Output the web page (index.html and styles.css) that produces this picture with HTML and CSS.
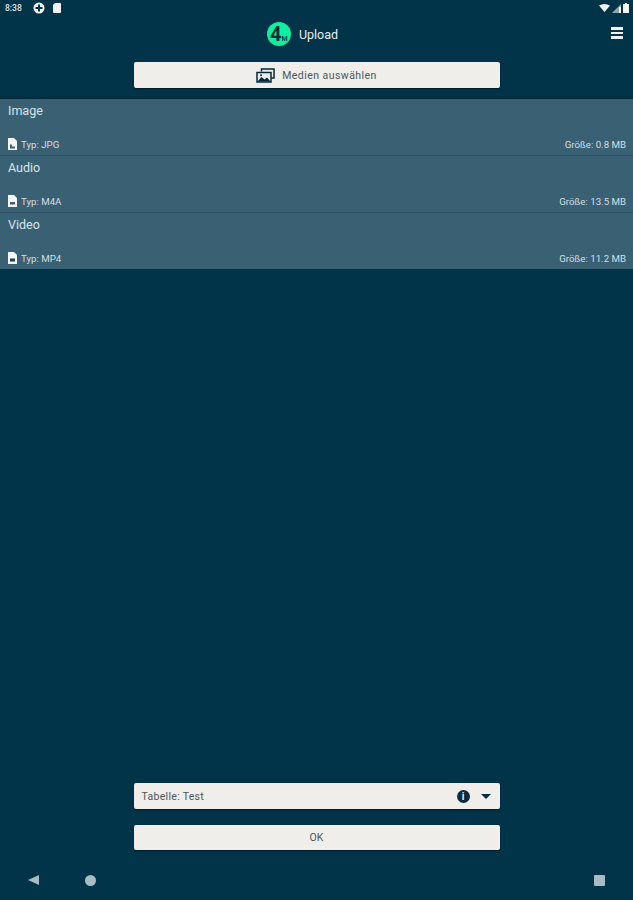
FILE: index.html
```html
<!DOCTYPE html>
<html lang="en">
<head>
    <meta charset="UTF-8">
    <meta name="viewport" content="width=device-width, initial-scale=1.0">
    <title>Upload</title>
    <link rel="stylesheet" href="styles.css">
</head>
<body>
    <div class="status-bar">
        <span class="clock">8:38</span>
        <svg class="status-icon" width="12" height="12" viewBox="0 0 12 12"><circle cx="6" cy="6" r="5.5" fill="#f2f4f4"/><path d="M5 2.5h2v2.500h2.500v2h-2.500v2.500h-2v-2.500h-2.500v-2h2.500z" fill="#033246"/></svg>
        <svg class="status-icon" width="8" height="10" viewBox="0 0 8 10"><path d="M2 0h5a1 1 0 0 1 1 1v8a1 1 0 0 1-1 1h-6a1 1 0 0 1-1-1v-7z" fill="#f2f4f4"/></svg>
        <div class="status-right">
            <svg width="11" height="8" viewBox="0 0 11 8"><path d="M0 1.500q5.500-3 11 0l-5.500 6.500z" fill="#f4f6f6"/></svg>
            <svg width="9" height="9" viewBox="0 0 9 9"><path d="M9 0v9h-9z" fill="#8fa5ae"/><path d="M7 3v6h2v-6z" fill="#f4f6f6"/></svg>
            <svg width="6" height="10" viewBox="0 0 6 10"><path d="M2 0h2v1h2v9h-6v-9h2z" fill="#f4f6f6"/></svg>
        </div>
    </div>
    <header class="top-bar">
        <div class="title-group">
            <div class="logo"><span class="logo-four">4</span><span class="logo-m">M</span></div>
            <span class="title">Upload</span>
        </div>
        <div class="menu-icon"><span></span><span></span><span></span></div>
    </header>
    <div class="centered">
        <button class="wide-btn pick-btn">
            <svg width="19" height="15" viewBox="0 0 19 15"><path d="M5.500 3.500v-2.500h12.500v9h-2.500" fill="none" stroke="#05283a" stroke-width="1.500"/><path d="M1 4.500h14v9.500h-14z" fill="none" stroke="#05283a" stroke-width="1.500"/><path d="M1.500 13.500l4-4.500 3 2.500 2.500-2 3.500 4z" fill="#05283a"/><circle cx="5" cy="7.200" r="1" fill="#05283a"/></svg>
            Medien auswählen
        </button>
    </div>
    <div class="media-list">
        <div class="media-row">
            <div class="media-name">Image</div>
            <div class="media-meta">
                <span class="media-type"><svg width="9" height="12" viewBox="0 0 9 12"><path d="M0 0h6l3 3v9h-9z" fill="#f4f6f6"/><path d="M2 6.500h2v2h3v2h-5z" fill="#3a6073"/></svg>Typ: JPG</span>
                <span>Größe: 0.8 MB</span>
            </div>
        </div>
        <div class="media-row">
            <div class="media-name">Audio</div>
            <div class="media-meta">
                <span class="media-type"><svg width="9" height="12" viewBox="0 0 9 12"><path d="M0 0h6l3 3v9h-9z" fill="#f4f6f6"/><path d="M2 7h5v2.500h-5z" fill="#3a6073"/></svg>Typ: M4A</span>
                <span>Größe: 13.5 MB</span>
            </div>
        </div>
        <div class="media-row">
            <div class="media-name">Video</div>
            <div class="media-meta">
                <span class="media-type"><svg width="9" height="12" viewBox="0 0 9 12"><path d="M0 0h6l3 3v9h-9z" fill="#f4f6f6"/><path d="M2 6.500h5v3h-5z" fill="#1e3f52"/></svg>Typ: MP4</span>
                <span>Größe: 11.2 MB</span>
            </div>
        </div>
    </div>
    <div class="bottom-actions">
        <div class="wide-btn table-select">
            <span class="table-label">Tabelle: Test</span>
            <span class="info-icon">i</span>
            <span class="caret"></span>
        </div>
        <button class="wide-btn ok-btn">OK</button>
    </div>
    <nav class="nav-bar">
        <span class="nav-back"></span>
        <span class="nav-home"></span>
        <span class="nav-recent"></span>
    </nav>
</body>
</html>
```

FILE: styles.css
```css
* {
  box-sizing: border-box;
}
body {
  margin: 0;
  width: 633px;
  height: 900px;
  background-color: #023449;
  color: #f0f3f3;
  font-family: Roboto, "Liberation Sans", sans-serif;
  display: flex;
  flex-direction: column;
  overflow: hidden;
}
.status-bar {
  height: 16px;
  display: flex;
  align-items: center;
  gap: 8px;
  padding: 0 4px 0 5px;
}
.clock {
  font-size: 8.500px;
  font-weight: 500;
  width: 20px;
  color: #dfe6e8;
}
.status-right {
  margin-left: auto;
  display: flex;
  align-items: center;
  gap: 2px;
}
.top-bar {
  position: relative;
  height: 36px;
  display: flex;
  justify-content: center;
  align-items: center;
}
.title-group {
  display: flex;
  align-items: center;
  gap: 8px;
  margin-right: 28px;
}
.logo {
  width: 24px;
  height: 24px;
  border-radius: 50%;
  background: #0ef0a0;
  color: #05283a;
  display: flex;
  align-items: baseline;
  justify-content: center;
  line-height: 24px;
}
.logo-four {
  font-size: 20px;
  font-weight: 700;
}
.logo-m {
  font-size: 7px;
  font-weight: 500;
}
.title {
  font-size: 12.500px;
  color: #e6ecee;
}
.menu-icon {
  position: absolute;
  right: 10px;
  top: 11px;
  width: 12px;
  display: flex;
  flex-direction: column;
  gap: 2px;
}
.menu-icon span {
  height: 2.500px;
  background: #f4f6f6;
}
.centered {
  display: flex;
  justify-content: center;
  padding-top: 10px;
}
.wide-btn {
  width: 366px;
  height: 26px;
  background: #efeeea;
  border: none;
  border-radius: 2px;
  box-shadow: 0 1px 2px rgba(0, 0, 0, 0.5);
  color: #4a565d;
  font-family: inherit;
  font-size: 10.500px;
}
.pick-btn {
  display: flex;
  justify-content: center;
  align-items: center;
  gap: 7px;
  letter-spacing: 0.45px;
}
.media-list {
  margin-top: 11px;
  box-shadow: 0 -1px 1px rgba(0, 0, 0, 0.25);
}
.media-row {
  height: 57px;
  background: #3a6073;
  border-bottom: 1px solid #2c5063;
  padding: 5px 7px 0 8px;
  display: flex;
  flex-direction: column;
  justify-content: space-between;
}
.media-row:last-child {
  height: 56px;
  border-bottom: none;
}
.media-name {
  font-size: 12.500px;
  line-height: 14px;
  color: #dbe4e8;
}
.media-meta {
  display: flex;
  justify-content: space-between;
  align-items: center;
  font-size: 9.700px;
  height: 14px;
  margin-bottom: 4px;
  color: #d5dfe3;
}
.media-type {
  display: flex;
  align-items: center;
  gap: 4px;
}
.bottom-actions {
  margin-top: auto;
  display: flex;
  flex-direction: column;
  align-items: center;
  gap: 16px;
}
.table-select {
  display: flex;
  align-items: center;
  padding: 0 8px;
}
.table-label {
  flex: 1;
  letter-spacing: 0.3px;
}
.info-icon {
  width: 13px;
  height: 13px;
  border-radius: 50%;
  background: #0a2b42;
  color: #efeeea;
  font-size: 10px;
  font-weight: 700;
  line-height: 13px;
  text-align: center;
  margin-right: 11px;
}
.caret {
  width: 0;
  height: 0;
  margin-right: 1px;
  border-left: 5.500px solid transparent;
  border-right: 5.500px solid transparent;
  border-top: 5.500px solid #0a2b42;
}
.ok-btn {
  height: 25px;
}
.nav-bar {
  height: 50px;
  position: relative;
  flex-shrink: 0;
}
.nav-back {
  position: absolute;
  left: 28px;
  top: 25px;
  border-top: 5.500px solid transparent;
  border-bottom: 5.500px solid transparent;
  border-right: 11px solid #a9bcc4;
}
.nav-home {
  position: absolute;
  left: 85px;
  top: 25px;
  width: 11px;
  height: 11px;
  border-radius: 50%;
  background: #a9bcc4;
}
.nav-recent {
  position: absolute;
  left: 594px;
  top: 25px;
  width: 11px;
  height: 11px;
  border-radius: 1px;
  background: #a9bcc4;
}
```
